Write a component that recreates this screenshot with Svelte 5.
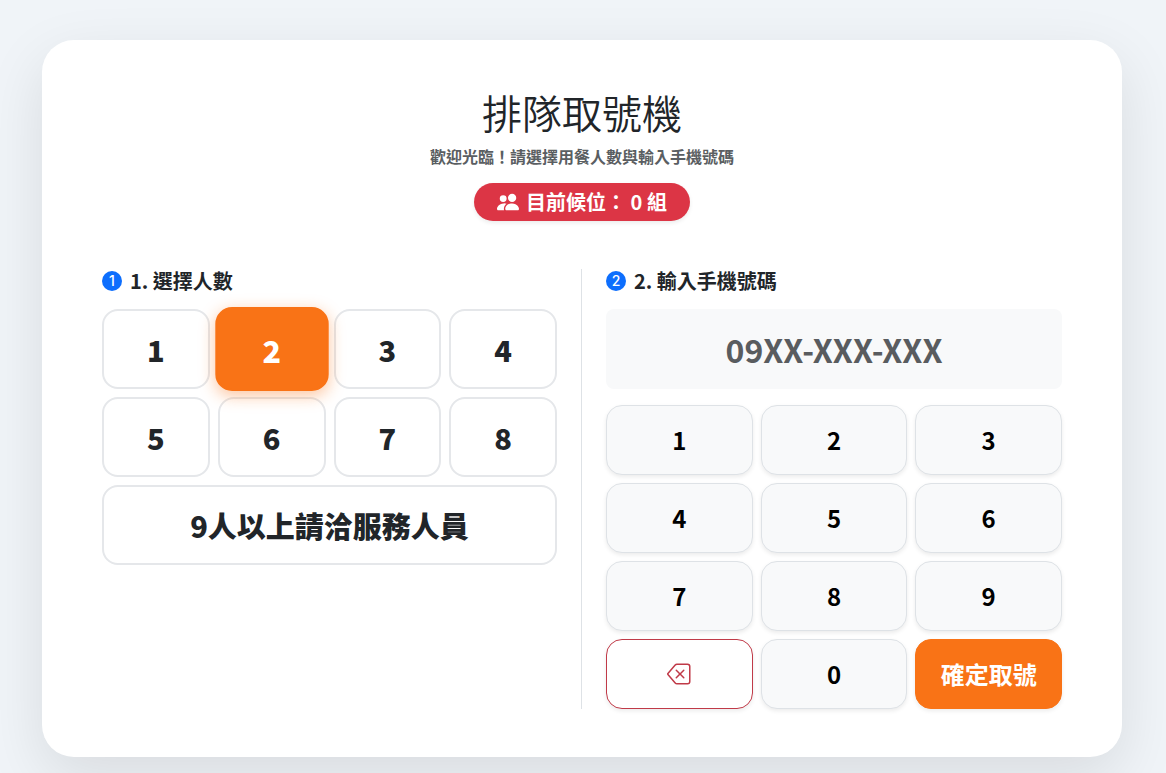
<script>
  const partySizes = [1, 2, 3, 4, 5, 6, 7, 8];
  const digits = ["1", "2", "3", "4", "5", "6", "7", "8", "9"];

  let selected = $state(2);
  let phone = $state("");
  let waiting = $state(0);

  // 0912345678 -> 0912-345-678
  let phoneText = $derived(
    [phone.slice(0, 4), phone.slice(4, 7), phone.slice(7)].filter(Boolean).join("-")
  );

  function press(digit) {
    if (phone.length < 10) {
      phone += digit;
    }
  }

  function backspace() {
    phone = phone.slice(0, -1);
  }

  function takeNumber(event) {
    event.preventDefault();
    if (phone.length === 10) {
      waiting += 1;
      phone = "";
    }
  }
</script>

<main class="kiosk">
  <form class="card" onsubmit={takeNumber}>
    <header class="header">
      <h1>排隊取號機</h1>
      <p class="subtitle">歡迎光臨！請選擇用餐人數與輸入手機號碼</p>
      <div class="waiting">
        <svg width="22" height="22" viewBox="0 0 16 16" fill="currentColor" aria-hidden="true">
          <path d="M7 14s-1 0-1-1 1-4 5-4 5 3 5 4-1 1-1 1zm4-6a3 3 0 1 0 0-6 3 3 0 0 0 0 6m-5.784 6A2.24 2.24 0 0 1 5 13c0-1.355.68-2.75 1.936-3.72A6.3 6.3 0 0 0 5 9c-4 0-5 3-5 4s1 1 1 1zM4.5 8a2.5 2.5 0 1 0 0-5 2.5 2.5 0 0 0 0 5" />
        </svg>
        <span>目前候位： {waiting} 組</span>
      </div>
    </header>

    <div class="columns">
      <section class="column people">
        <h2><span class="step">1</span>1. 選擇人數</h2>
        <div class="sizes">
          {#each partySizes as size}
            <button
              type="button"
              class="size"
              class:active={selected === size}
              aria-pressed={selected === size}
              onclick={() => (selected = size)}
            >{size}</button>
          {/each}
          <button
            type="button"
            class="size wide"
            class:active={selected === 9}
            aria-pressed={selected === 9}
            onclick={() => (selected = 9)}
          >9人以上請洽服務人員</button>
        </div>
      </section>

      <section class="column dial">
        <h2><span class="step">2</span><label for="phone">2. 輸入手機號碼</label></h2>
        <input id="phone" class="phone" type="text" placeholder="09XX-XXX-XXX" value={phoneText} readonly />
        <div class="keypad">
          {#each digits as digit}
            <button type="button" class="key" onclick={() => press(digit)}>{digit}</button>
          {/each}
          <button type="button" class="key erase" aria-label="刪除" onclick={backspace}>
            <svg width="24" height="24" viewBox="0 0 16 16" fill="currentColor" aria-hidden="true">
              <path d="M5.83 5.146a.5.5 0 0 0 0 .708L7.975 8l-2.147 2.146a.5.5 0 0 0 .707.708l2.147-2.147 2.146 2.147a.5.5 0 0 0 .707-.708L9.39 8l2.146-2.146a.5.5 0 0 0-.707-.708L8.683 7.293 6.536 5.146a.5.5 0 0 0-.707 0z" />
              <path d="M13.683 1a2 2 0 0 1 2 2v10a2 2 0 0 1-2 2h-7.08a2 2 0 0 1-1.519-.698L.241 8.65a1 1 0 0 1 0-1.302L5.084 1.7A2 2 0 0 1 6.603 1zm-7.08 1a1 1 0 0 0-.76.35L1 8l4.844 5.65a1 1 0 0 0 .759.35h7.08a1 1 0 0 0 1-1V3a1 1 0 0 0-1-1z" />
            </svg>
          </button>
          <button type="button" class="key" onclick={() => press("0")}>0</button>
          <button type="submit" class="key confirm">確定取號</button>
        </div>
      </section>
    </div>
  </form>
</main>

<style>
  :global(body) {
    background: #f0f4f8;
  }

  .kiosk {
    padding: 40px 44px 16px 42px;
    overflow: hidden;
    color: #212529;
    font-family: "Noto Sans CJK TC", "Noto Sans", sans-serif;
    font-size: 16px;
    line-height: 24px;
  }

  .kiosk * {
    box-sizing: border-box;
  }

  .card {
    max-width: 1080px;
    margin: 0 auto;
    padding: 48px 60px;
    background: #fff;
    border-radius: 32px;
    box-shadow: 0 20px 60px rgba(0, 0, 0, 0.1);
  }

  .header {
    display: flex;
    flex-direction: column;
    align-items: center;
    margin-bottom: 48px;
  }

  h1 {
    margin: 0 0 8px;
    font-size: 40px;
    font-weight: 350;
    line-height: 48px;
  }

  .subtitle {
    margin: 0 0 15px;
    color: #5a5e62;
    font-weight: 700;
  }

  .waiting {
    display: flex;
    align-items: center;
    gap: 7px;
    padding: 6px 23px;
    border-radius: 50px;
    background: #dc3545;
    box-shadow: 0 2px 4px rgba(0, 0, 0, 0.08);
    color: #fff;
    font-size: 20px;
    font-weight: 700;
    line-height: 26px;
  }

  .columns {
    display: grid;
    grid-template-columns: 1fr 1fr;
  }

  .people {
    padding-right: 24px;
    border-right: 1px solid #dee2e6;
  }

  .dial {
    padding-left: 24px;
  }

  h2 {
    display: flex;
    align-items: center;
    gap: 8px;
    margin: 0 0 16px;
    font-size: 20px;
    font-weight: 700;
    line-height: 24px;
  }

  .step {
    width: 20px;
    height: 20px;
    border-radius: 50%;
    background: #0d6efd;
    color: #fff;
    font-family: Inter, sans-serif;
    font-size: 14px;
    font-weight: 500;
    line-height: 20px;
    text-align: center;
  }

  .sizes {
    display: grid;
    grid-template-columns: repeat(4, 1fr);
    gap: 8px;
  }

  button {
    font-family: inherit;
    cursor: pointer;
  }

  .size {
    height: 80px;
    padding: 0;
    border: 2px solid #e5e7ea;
    border-radius: 16px;
    background: #fff;
    color: #212529;
    font-size: 29px;
    font-weight: 900;
    line-height: 40px;
  }

  .size.active {
    border-color: #f97316;
    background: #f97316;
    box-shadow: 0 4px 15px rgba(249, 115, 22, 0.4);
    color: #fff;
    transform: scale(1.05);
  }

  .wide {
    grid-column: 1 / -1;
  }

  .wide.active {
    transform: none;
  }

  .phone {
    display: block;
    width: 100%;
    height: 80px;
    margin-bottom: 16px;
    padding: 0 16px;
    border: 0;
    border-radius: 8px;
    outline: 0;
    background: #f8f9fa;
    color: #212529;
    font-family: inherit;
    font-size: 32px;
    font-weight: 700;
    text-align: center;
  }

  .phone::placeholder {
    color: #595c5f;
    opacity: 1;
  }

  .keypad {
    display: grid;
    grid-template-columns: repeat(3, 1fr);
    gap: 8px;
  }

  .key {
    display: flex;
    align-items: center;
    justify-content: center;
    height: 70px;
    padding: 0;
    border: 1px solid #dee2e6;
    border-radius: 16px;
    background: #f8f9fa;
    box-shadow: 0 2px 4px rgba(0, 0, 0, 0.08);
    color: #000;
    font-size: 24px;
    font-weight: 700;
    line-height: 36px;
  }

  .erase {
    border-color: #c03a48;
    background: #fff;
    color: #c03a48;
  }

  .confirm {
    border-color: #f97316;
    background: #f97316;
    color: #fff;
  }

  @media (max-width: 720px) {
    .card {
      padding: 32px 24px;
    }

    .columns {
      grid-template-columns: 1fr;
      gap: 32px;
    }

    .people {
      padding-right: 0;
      border-right: 0;
    }

    .dial {
      padding-left: 0;
    }
  }
</style>
